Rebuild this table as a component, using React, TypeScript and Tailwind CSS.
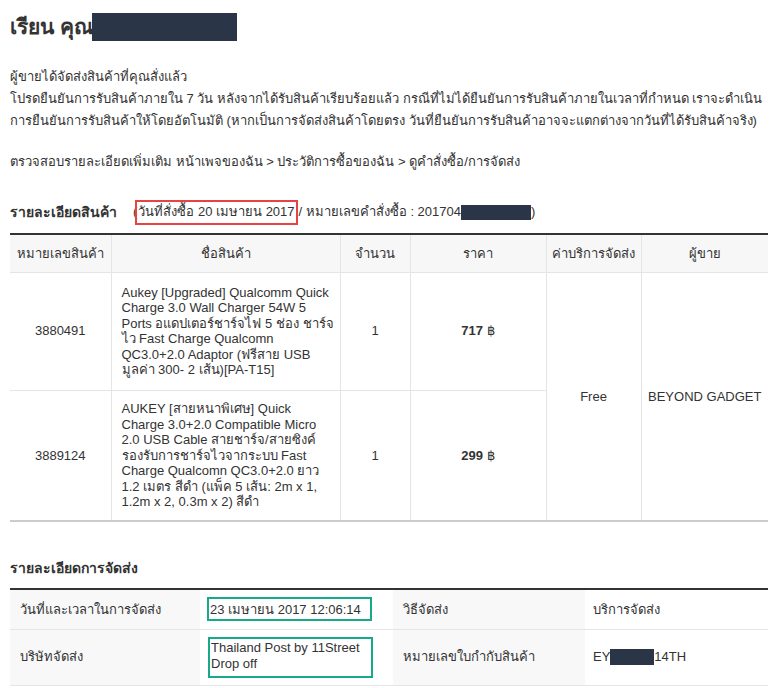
const font = { fontFamily: '"Liberation Sans", "Noto Sans", sans-serif' };

const products = [
  {
    id: "3880491",
    name: [
      "Aukey [Upgraded] Qualcomm Quick",
      "Charge 3.0 Wall Charger 54W 5",
      "Ports อแดปเตอร์ชาร์จไฟ 5 ช่อง ชาร์จ",
      "ไว Fast Charge Qualcomn",
      "QC3.0+2.0 Adaptor (ฟรีสาย USB",
      "มูลค่า 300- 2 เส้น)[PA-T15]",
    ],
    qty: "1",
    price: "717",
  },
  {
    id: "3889124",
    name: [
      "AUKEY [สายหนาพิเศษ] Quick",
      "Charge 3.0+2.0 Compatible Micro",
      "2.0 USB Cable สายชาร์จ/สายซิงค์",
      "รองรับการชาร์จไวจากระบบ Fast",
      "Charge Qualcomn QC3.0+2.0 ยาว",
      "1.2 เมตร สีดำ (แพ็ค 5 เส้น: 2m x 1,",
      "1.2m x 2, 0.3m x 2) สีดำ",
    ],
    qty: "1",
    price: "299",
  },
];

export default function App() {
  return (
    <div className="w-[777px] h-[688px] overflow-hidden bg-white text-[#333] text-[13px]" style={font}>
      <div className="px-[10px] pt-[12px]">
        <h1 className="flex items-center text-[21px] font-semibold leading-[30px] text-[#333]">
          <span>เรียน คุณ</span>
          <span className="inline-block w-[145px] h-[28px] bg-[#2b3548] -ml-[1px]" />
        </h1>

        <div className="mt-[24px] leading-[22px] whitespace-nowrap">
          <p>ผู้ขายได้จัดส่งสินค้าที่คุณสั่งแล้ว</p>
          <p>
            โปรดยืนยันการรับสินค้าภายใน 7 วัน หลังจากได้รับสินค้าเรียบร้อยแล้ว กรณีที่ไม่ได้ยืนยันการรับสินค้าภายในเวลาที่กำหนด เราจะดำเนิน
          </p>
          <p>
            การยืนยันการรับสินค้าให้โดยอัตโนมัติ (หากเป็นการจัดส่งสินค้าโดยตรง วันที่ยืนยันการรับสินค้าอาจจะแตกต่างจากวันที่ได้รับสินค้าจริง)
          </p>
          <p className="mt-[19px]">ตรวจสอบรายละเอียดเพิ่มเติม หน้าเพจของฉัน &gt; ประวัติการซื้อของฉัน &gt; ดูคำสั่งซื้อ/การจัดส่ง</p>
        </div>

        <div className="mt-[26px] flex items-center h-[26px]">
          <span className="font-bold text-[14px]">รายละเอียดสินค้า</span>
          <span className="ml-[16px] flex items-center whitespace-nowrap">
            (
            <span className="border-2 border-[#e84343] px-[1px] h-[25px] flex items-center -ml-[2px]">
              วันที่สั่งซื้อ 20 เมษายน 2017
            </span>
            <span className="ml-[1px]">/ หมายเลขคำสั่งซื้อ : 201704</span>
            <span className="inline-block w-[70px] h-[15px] bg-[#2b3548]" />
            )
          </span>
        </div>

        <table className="mt-[8px] w-[758px] border-collapse table-fixed border-t-2 border-t-[#333] border-b-2 border-b-[#ccc]">
          <colgroup>
            <col className="w-[101px]" />
            <col className="w-[229px]" />
            <col className="w-[70px]" />
            <col className="w-[136px]" />
            <col className="w-[95px]" />
            <col className="w-[127px]" />
          </colgroup>
          <thead>
            <tr className="h-[38px] bg-[#f7f7f7]">
              {["หมายเลขสินค้า", "ชื่อสินค้า", "จำนวน", "ราคา", "ค่าบริการจัดส่ง", "ผู้ขาย"].map((h, i) => (
                <th
                  key={h}
                  className={`font-normal text-center whitespace-nowrap border-b border-b-[#e5e5e5] ${i > 0 ? "border-l border-l-[#e5e5e5]" : ""}`}
                >
                  {h}
                </th>
              ))}
            </tr>
          </thead>
          <tbody>
            {products.map((p, idx) => (
              <tr key={p.id} className={idx === 0 ? "h-[118px]" : "h-[131px]"}>
                <td className="text-center border-b border-b-[#e5e5e5]">{p.id}</td>
                <td className="px-[10px] border-l border-l-[#e5e5e5] border-b border-b-[#e5e5e5] leading-[15.5px] whitespace-nowrap">
                  {p.name.map((l) => (
                    <div key={l}>{l}</div>
                  ))}
                </td>
                <td className="text-center border-l border-l-[#e5e5e5] border-b border-b-[#e5e5e5]">{p.qty}</td>
                <td className="text-center border-l border-l-[#e5e5e5] border-b border-b-[#e5e5e5]">
                  <b>{p.price}</b> ฿
                </td>
                {idx === 0 && (
                  <>
                    <td rowSpan={2} className="text-center border-l border-l-[#e5e5e5]">
                      Free
                    </td>
                    <td rowSpan={2} className="text-center border-l border-l-[#e5e5e5]">
                      BEYOND GADGET
                    </td>
                  </>
                )}
              </tr>
            ))}
          </tbody>
        </table>

        <h2 className="mt-[36px] font-bold text-[14px] leading-[20px]">รายละเอียดการจัดส่ง</h2>

        <table className="mt-[10px] w-[758px] border-collapse table-fixed border-t-2 border-t-[#333]">
          <colgroup>
            <col className="w-[190px]" />
            <col className="w-[193px]" />
            <col className="w-[192px]" />
            <col className="w-[183px]" />
          </colgroup>
          <tbody>
            <tr className="h-[40px] border-b border-b-[#e5e5e5]">
              <td className="bg-[#f8f8f8] pl-[10px]">วันที่และเวลาในการจัดส่ง</td>
              <td className="pl-[7px]">
                <div className="border-2 border-[#16a98a] w-[165px] h-[24px] flex items-center pl-[1px] whitespace-nowrap">
                  23 เมษายน 2017 12:06:14
                </div>
              </td>
              <td className="bg-[#f8f8f8] pl-[10px]">วิธีจัดส่ง</td>
              <td className="pl-[8px]">บริการจัดส่ง</td>
            </tr>
            <tr className="h-[56px] border-b border-b-[#e5e5e5]">
              <td className="bg-[#f8f8f8] pl-[10px]">บริษัทจัดส่ง</td>
              <td className="pl-[8px]">
                <div className="border-2 border-[#16a98a] w-[165px] h-[41px] pl-[1px] pt-[1px] leading-[16px]">
                  Thailand Post by 11Street
                  <br />
                  Drop off
                </div>
              </td>
              <td className="bg-[#f8f8f8] pl-[10px]">หมายเลขใบกำกับสินค้า</td>
              <td className="pl-[8px]">
                <span className="flex items-center">
                  EY
                  <span className="inline-block w-[44px] h-[16px] bg-[#2b3548]" />
                  14TH
                </span>
              </td>
            </tr>
          </tbody>
        </table>
      </div>
    </div>
  );
}
